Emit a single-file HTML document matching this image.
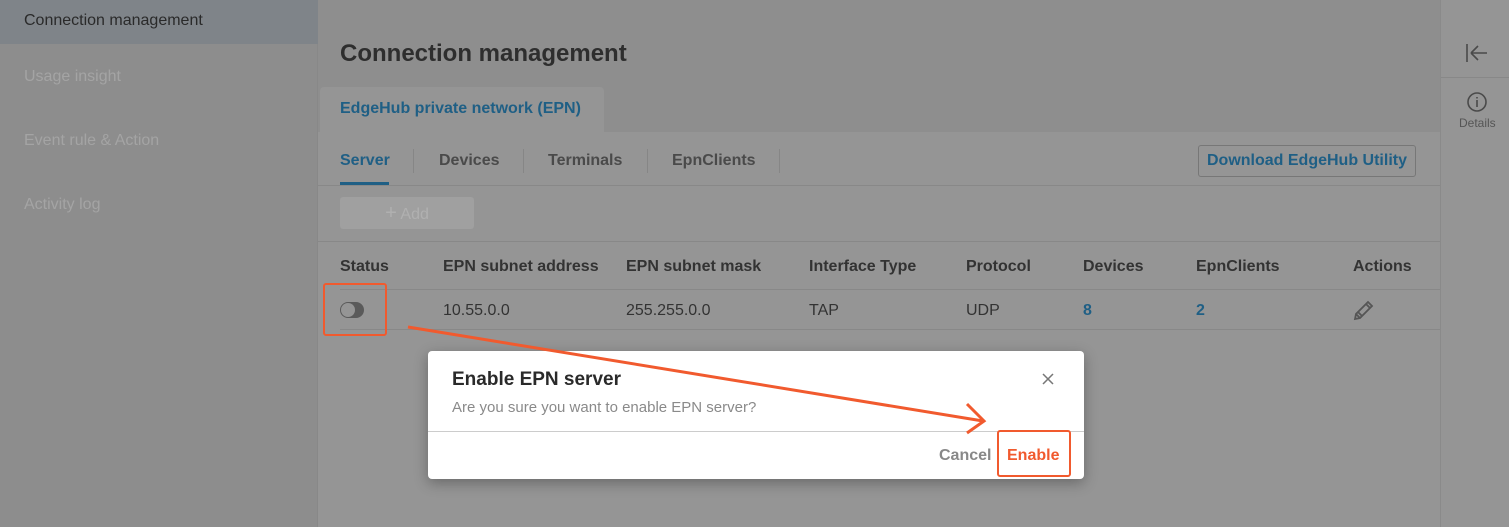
<!DOCTYPE html>
<html><head><meta charset="utf-8"><style>
*{margin:0;padding:0;box-sizing:border-box}
body{width:1509px;height:527px;overflow:hidden;background:#959595;font-family:"Liberation Sans",Arial,sans-serif;position:relative}
.a{position:absolute}
.side{left:0;top:0;width:318px;height:527px;background:#8d8d8d;border-right:1px solid #888}
.sel{left:0;top:0;width:318px;height:44px;background:#7f8489}
.st{left:24px;font-size:16px;color:#a4a4a4}
.hdr{left:318px;top:0;width:1122px;height:132px;background:#8e8e8e}
.rp{left:1440px;top:0;width:69px;height:527px;background:#959595;border-left:1px solid #8a8a8a}
.b{font-weight:bold}
.th{top:258px;font-size:16px;font-weight:bold;color:#333}
.td{top:302px;font-size:16px;color:#333}
.line{height:1px;background:#888}
</style></head><body>
<div class="a side"></div>
<div class="a sel"></div>
<div class="a st" style="top:12px;color:#2a2a2a">Connection management</div>
<div class="a st" style="top:68px">Usage insight</div>
<div class="a st" style="top:132px">Event rule &amp; Action</div>
<div class="a st" style="top:196px">Activity log</div>
<div class="a hdr"></div>
<div class="a b" style="left:340px;top:40px;font-size:24px;color:#2e2e2e">Connection management</div>
<div class="a" style="left:320px;top:87px;width:284px;height:46px;background:#959595;border-radius:4px 4px 0 0"></div>
<div class="a b" style="left:340px;top:100px;font-size:16px;color:#1f5f85">EdgeHub private network (EPN)</div>
<div class="a b" style="left:340px;top:152px;font-size:16px;color:#1f5f85">Server</div>
<div class="a" style="left:340px;top:182px;width:49px;height:3px;background:#1f5f85"></div>
<div class="a" style="left:413px;top:149px;width:1px;height:24px;background:#868686"></div>
<div class="a b" style="left:439px;top:152px;font-size:16px;color:#4a4a4a">Devices</div>
<div class="a" style="left:523px;top:149px;width:1px;height:24px;background:#868686"></div>
<div class="a b" style="left:548px;top:152px;font-size:16px;color:#4a4a4a">Terminals</div>
<div class="a" style="left:647px;top:149px;width:1px;height:24px;background:#868686"></div>
<div class="a b" style="left:672px;top:152px;font-size:16px;color:#4a4a4a">EpnClients</div>
<div class="a" style="left:779px;top:149px;width:1px;height:24px;background:#868686"></div>
<div class="a b" style="left:1198px;top:145px;width:218px;height:32px;border:1px solid #777;border-radius:3px;font-size:16px;color:#1f5f85;text-align:center;line-height:30px">Download EdgeHub Utility</div>
<div class="a line" style="left:318px;top:185px;width:1122px"></div>
<div class="a" style="left:340px;top:197px;width:134px;height:32px;background:#a0a0a0;border-radius:3px;color:#b0b0b0;font-size:16px;text-align:center;line-height:32px"><span style="font-size:20px">+</span> Add</div>
<div class="a line" style="left:318px;top:241px;width:1122px"></div>
<div class="a th" style="left:340px">Status</div>
<div class="a th" style="left:443px">EPN subnet address</div>
<div class="a th" style="left:626px">EPN subnet mask</div>
<div class="a th" style="left:809px">Interface Type</div>
<div class="a th" style="left:966px">Protocol</div>
<div class="a th" style="left:1083px">Devices</div>
<div class="a th" style="left:1196px">EpnClients</div>
<div class="a th" style="left:1353px">Actions</div>
<div class="a line" style="left:340px;top:289px;width:1100px"></div>
<div class="a" style="left:340px;top:302px;width:24px;height:16px;border-radius:8px;background:#5a5a5a"></div>
<div class="a" style="left:341px;top:303px;width:14px;height:14px;border-radius:7px;background:#959595"></div>
<div class="a td" style="left:443px">10.55.0.0</div>
<div class="a td" style="left:626px">255.255.0.0</div>
<div class="a td" style="left:809px">TAP</div>
<div class="a td" style="left:966px">UDP</div>
<div class="a td b" style="left:1083px;color:#1f5f85">8</div>
<div class="a td b" style="left:1196px;color:#1f5f85">2</div>
<svg class="a" style="left:1353px;top:299px" width="22" height="22" viewBox="0 0 22 22"><path d="M2 20 L3 15 L15 3 L19 7 L7 19 Z M3 15 L7 19 M13 5 L17 9 M5 13 L9 17" fill="none" stroke="#555" stroke-width="1.8"/></svg>
<div class="a line" style="left:340px;top:329px;width:1100px"></div>
<div class="a rp"></div>
<svg class="a" style="left:1465px;top:42px" width="24" height="22"><path d="M2 2V20M6 11H22M6 11L13 4M6 11L13 18" fill="none" stroke="#4a4a4a" stroke-width="1.6"/></svg>
<div class="a line" style="left:1441px;top:77px;width:68px"></div>
<svg class="a" style="left:1466px;top:91px" width="22" height="22"><circle cx="11" cy="11" r="9" fill="none" stroke="#4a4a4a" stroke-width="1.6"/><path d="M11 9V16M11 6V7.5" stroke="#4a4a4a" stroke-width="1.6"/></svg>
<div class="a" style="left:1459px;top:116px;font-size:12px;color:#555">Details</div>
<div class="a" style="left:428px;top:351px;width:656px;height:128px;background:#fff;border-radius:4px;box-shadow:0 4px 14px rgba(0,0,0,.3)"></div>
<div class="a b" style="left:452px;top:369px;font-size:19px;color:#2a2a2a">Enable EPN server</div>
<svg class="a" style="left:1042px;top:373px" width="12" height="12"><path d="M1 1L11 11M11 1L1 11" stroke="#777" stroke-width="1.5"/></svg>
<div class="a" style="left:452px;top:399px;font-size:15px;color:#8a8a8a">Are you sure you want to enable EPN server?</div>
<div class="a" style="left:428px;top:431px;width:656px;height:1px;background:#ccc"></div>
<div class="a b" style="left:939px;top:447px;font-size:16px;color:#888">Cancel</div>
<div class="a b" style="left:1007px;top:447px;font-size:16px;color:#f15a2e">Enable</div>
<div class="a" style="left:997px;top:430px;width:74px;height:47px;border:2px solid #f15a2e;border-radius:3px"></div>
<div class="a" style="left:323px;top:283px;width:64px;height:53px;border:2px solid #f15a2e;border-radius:3px"></div>
<svg class="a" style="left:0;top:0" width="1509" height="527"><path d="M408 327L983 421M967 404L984 421L967 433" fill="none" stroke="#f15a2e" stroke-width="3"/></svg>
</body></html>
